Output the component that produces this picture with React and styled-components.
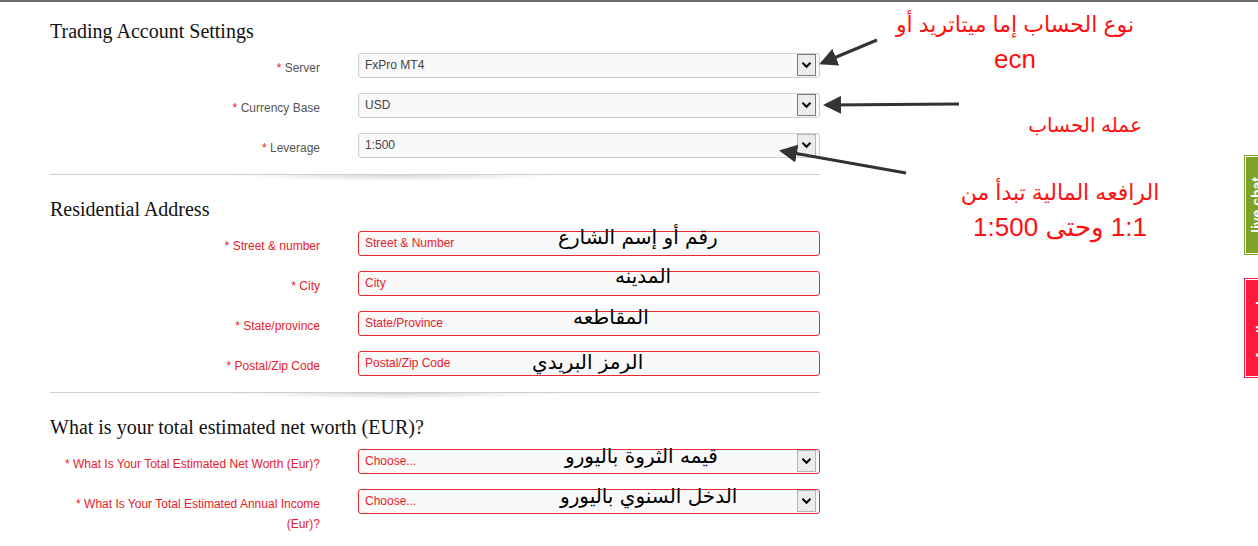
import React from 'react';
import styled, {createGlobalStyle, css} from 'styled-components';

const GlobalStyle = createGlobalStyle`
  html, body {
    margin: 0;
    padding: 0;
    background: #fff;
  }
  body {
    font-family: "Liberation Sans", "DejaVu Sans", Arial, sans-serif;
    overflow: hidden;
  }
`;

const Page = styled.div`
  position: relative;
  width: 1258px;
  height: 546px;
  border-top: 2px solid #6f6f6f;
  box-sizing: border-box;
  overflow: hidden;
`;

const Form = styled.div`
  width: 770px;
  padding-left: 50px;
  padding-top: 17px;
`;

const Heading = styled.h2`
  margin: 0 0 10px;
  font-family: "Liberation Serif", Georgia, serif;
  font-weight: normal;
  font-size: 20px;
  line-height: 24px;
  color: #111;
`;

const Rows = styled.div`
  display: flex;
  flex-direction: column;
  gap: 15px;
`;

const Row = styled.div`
  display: grid;
  grid-template-columns: 270px 462px;
  column-gap: 38px;
  align-items: start;
`;

const Label = styled.label`
  padding-top: 5px;
  text-align: right;
  font-size: 12px;
  line-height: 20px;
  color: ${({error}) => (error ? '#e8202a' : '#555')};
`;

const Star = styled.span`
  color: #e8202a;
`;

const Field = styled.div`
  position: relative;
  height: 25px;
  box-sizing: border-box;
  border: 1px solid ${({error}) => (error ? '#e42a30' : '#cfcfcf')};
  border-radius: 3px;
  background: #f9f9f9;
  display: flex;
  align-items: center;
  padding-left: 6px;
  padding-bottom: 1px;
  font-size: 12px;
  color: ${({error}) => (error ? '#e8202a' : '#444')};
`;

const SelectButton = styled.span`
  position: absolute;
  right: 3px;
  top: 0;
  width: 19px;
  height: 22px;
  box-sizing: border-box;
  border: 1px solid ${({light}) => (light ? '#b5b5b5' : '#7a7a7a')};
  background: #ececec;
  display: flex;
  align-items: center;
  justify-content: center;
`;

const Note = styled.span`
  position: absolute;
  left: ${({left}) => left}px;
  top: ${({top}) => top}px;
  font-family: "DejaVu Sans", sans-serif;
  font-size: 20px;
  color: #000;
  white-space: nowrap;
  direction: rtl;
  pointer-events: none;
`;

const Separator = styled.div`
  position: relative;
  margin: 16px 0 22px;
  height: 1px;
  background: #cfcfcf;
  &::after {
    content: '';
    position: absolute;
    left: 180px;
    top: 1px;
    width: 330px;
    height: 6px;
    background: radial-gradient(ellipse at 50% 0%, rgba(0, 0, 0, 0.16), rgba(0, 0, 0, 0) 70%);
  }
`;

const RedNote = styled.div`
  position: absolute;
  left: ${({left}) => left}px;
  top: ${({top}) => top}px;
  width: ${({width}) => width}px;
  text-align: center;
  direction: rtl;
  font-family: "Liberation Sans", "DejaVu Sans", sans-serif;
  color: #ff1010;
  font-size: ${({size}) => size || 20}px;
  line-height: 34px;
  white-space: nowrap;
`;

const BigLine = styled.span`
  font-size: ${({size}) => size}px;
`;

const Arrows = styled.svg`
  position: absolute;
  left: 0;
  top: 0;
  pointer-events: none;
`;

const SideTab = styled.div`
  position: absolute;
  left: 1244px;
  top: ${({top}) => top}px;
  width: 24px;
  height: 100px;
  box-sizing: border-box;
  border: 1px solid ${({color}) => color};
  outline: 1px solid #fff;
  outline-offset: -2px;
  background: ${({color}) => color};
  color: #fff;
  font-weight: bold;
  font-size: 14px;
  line-height: 14px;
  display: flex;
  align-items: center;
  justify-content: center;
  writing-mode: vertical-rl;
  transform: rotate(180deg);
  ${({shift}) => css`
    padding-right: ${shift}px;
  `}
`;

const Chevron = () => (
    <svg width="11" height="8" viewBox="0 0 11 8">
        <path d="M1.5 1.8 L5.5 5.8 L9.5 1.8" fill="none" stroke="#000" strokeWidth="2"/>
    </svg>
);

const Select = ({value, error, light, notes}) => (
    <Field error={error}>
        {value}
        {notes}
        <SelectButton light={light}><Chevron/></SelectButton>
    </Field>
);

const FormRow = ({label, error, children}) => (
    <Row>
        <Label error={error}><Star>*</Star> {label}</Label>
        {children}
    </Row>
);

const App = () => {
    return (
        <Page>
            <GlobalStyle/>
            <Form>
                <Heading>Trading Account Settings</Heading>
                <Rows>
                    <FormRow label="Server"><Select value="FxPro MT4"/></FormRow>
                    <FormRow label="Currency Base"><Select value="USD"/></FormRow>
                    <FormRow label="Leverage"><Select value="1:500" light/></FormRow>
                </Rows>
                <Separator/>

                <Heading>Residential Address</Heading>
                <Rows>
                    <FormRow label="Street & number" error>
                        <Field error>Street &amp; Number<Note left={199} top={-7}>رقم أو إسم الشارع</Note></Field>
                    </FormRow>
                    <FormRow label="City" error>
                        <Field error>City<Note left={256} top={-8}>المدينه</Note></Field>
                    </FormRow>
                    <FormRow label="State/province" error>
                        <Field error>State/Province<Note left={214} top={-7}>المقاطعه</Note></Field>
                    </FormRow>
                    <FormRow label="Postal/Zip Code" error>
                        <Field error>Postal/Zip Code<Note left={173} top={-2}>الرمز البريدي</Note></Field>
                    </FormRow>
                </Rows>
                <Separator/>

                <Heading>What is your total estimated net worth (EUR)?</Heading>
                <Rows>
                    <FormRow label="What Is Your Total Estimated Net Worth (Eur)?" error>
                        <Select value="Choose..." error light
                                notes={<Note left={206} top={-6}>قيمه الثروة باليورو</Note>}/>
                    </FormRow>
                    <FormRow label="What Is Your Total Estimated Annual Income (Eur)?" error>
                        <Select value="Choose..." error light
                                notes={<Note left={201} top={-6}>الدخل السنوي باليورو</Note>}/>
                    </FormRow>
                </Rows>
            </Form>

            <RedNote left={880} top={6} width={270} size={22}>
                نوع الحساب إما ميتاتريد أو
                <br/>
                <BigLine size={26}>ecn</BigLine>
            </RedNote>
            <RedNote left={1000} top={106} width={170} size={20}>عمله الحساب</RedNote>
            <RedNote left={940} top={174} width={240} size={22}>
                الرافعه المالية تبدأ من
                <br/>
                <BigLine size={26}>1:1 وحتى 1:500</BigLine>
            </RedNote>

            <Arrows width="1258" height="546">
                <defs>
                    <marker id="head" markerWidth="6" markerHeight="6" refX="5" refY="3" orient="auto"
                            markerUnits="strokeWidth">
                        <path d="M0 0 L6 3 L0 6 Z" fill="#333"/>
                    </marker>
                </defs>
                <line x1="877" y1="38" x2="822" y2="61" stroke="#333" strokeWidth="3" markerEnd="url(#head)"/>
                <line x1="959" y1="102" x2="826" y2="103" stroke="#333" strokeWidth="3" markerEnd="url(#head)"/>
                <line x1="906" y1="171" x2="782" y2="149" stroke="#333" strokeWidth="3" markerEnd="url(#head)"/>
            </Arrows>

            <SideTab top={153} color="#7ea327" shift={2}>live chat</SideTab>
            <SideTab top={276} color="#fb1c3d" shift={12}>feedback</SideTab>
        </Page>
    );
};

export default App;
